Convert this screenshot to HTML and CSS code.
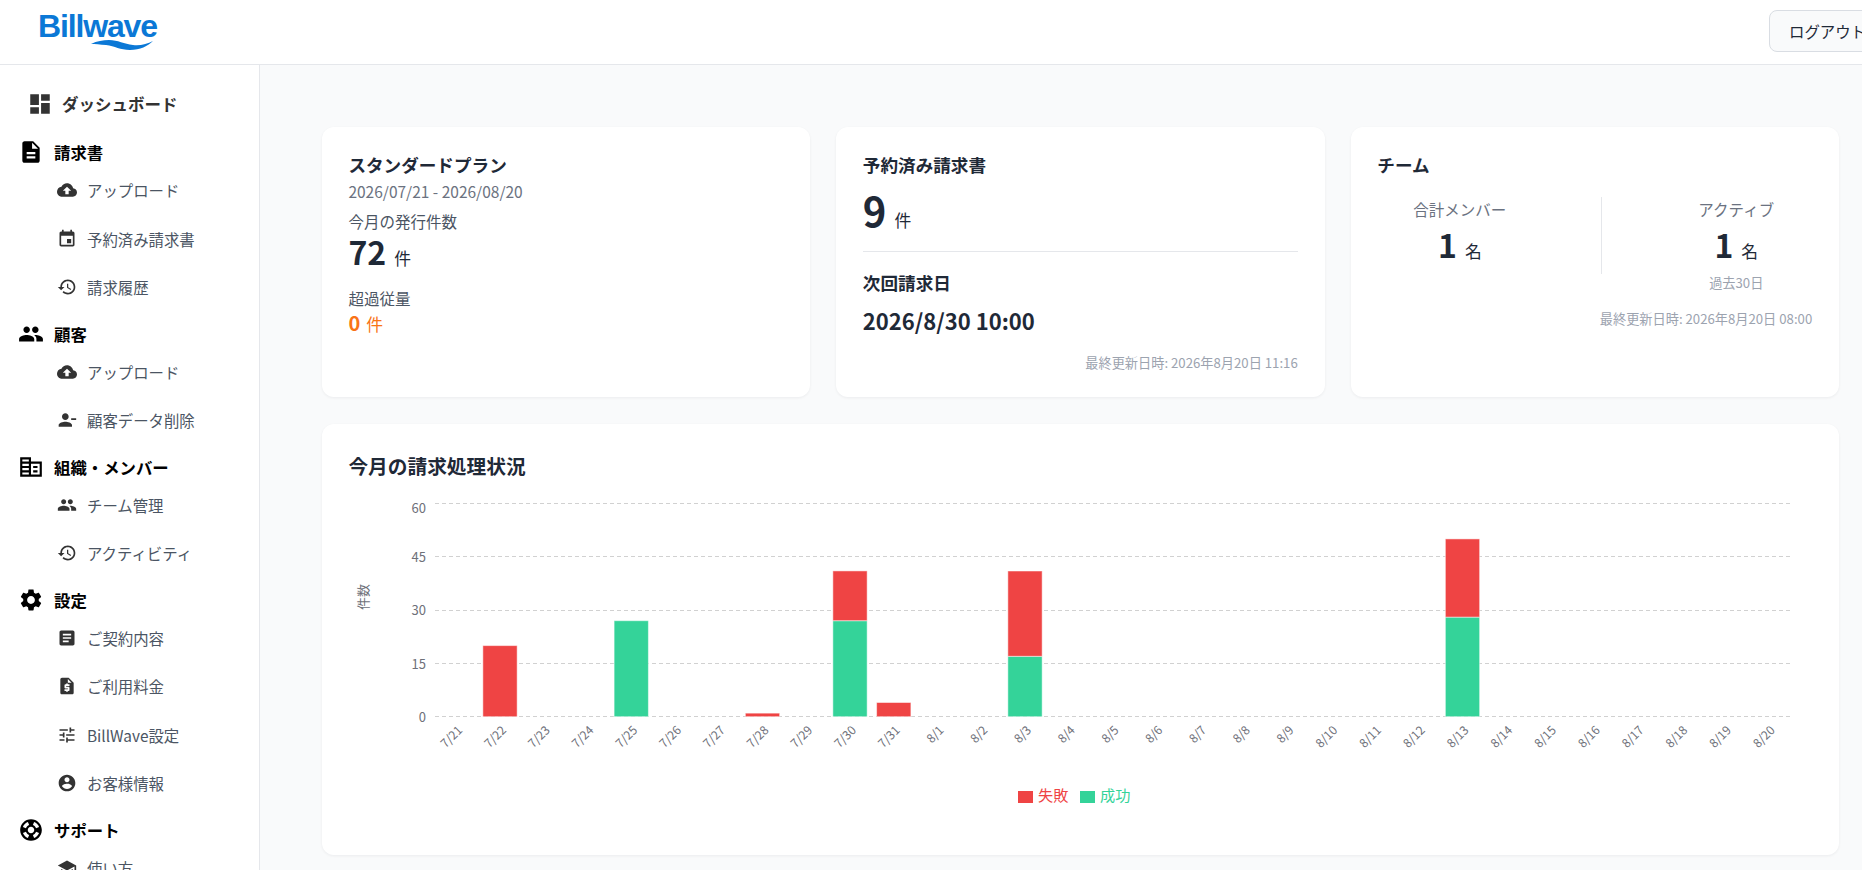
FILE: index.html
```html
<!DOCTYPE html>
<html lang="ja">
<head>
<meta charset="utf-8">
<title>Billwave</title>
<link rel="stylesheet" href="styles.css">
</head>
<body>
<svg class="sprite" aria-hidden="true">
  <symbol id="i-dashboard" viewBox="0 0 24 24"><path d="M3 13h8V3H3v10zm0 8h8v-6H3v6zm10 0h8V11h-8v10zm0-18v6h8V3h-8z"/></symbol>
  <symbol id="i-description" viewBox="0 0 24 24"><path d="M14 2H6c-1.1 0-1.99.9-1.99 2L4 20c0 1.1.89 2 1.99 2H18c1.1 0 2-.9 2-2V8l-6-6zm2 16H8v-2h8v2zm0-4H8v-2h8v2zm-3-5V3.5L18.5 9H13z"/></symbol>
  <symbol id="i-upload" viewBox="0 0 24 24"><path d="M19.35 10.04C18.67 6.59 15.64 4 12 4 9.11 4 6.6 5.64 5.35 8.04 2.34 8.36 0 10.91 0 14c0 3.31 2.69 6 6 6h13c2.76 0 5-2.24 5-5 0-2.64-2.05-4.78-4.65-4.96zM14 13v4h-4v-4H7l5-5 5 5h-3z"/></symbol>
  <symbol id="i-event" viewBox="0 0 24 24"><path d="M17 12h-5v5h5v-5zM16 1v2H8V1H6v2H5c-1.11 0-1.99.9-1.99 2L3 19c0 1.1.89 2 2 2h14c1.1 0 2-.9 2-2V5c0-1.1-.9-2-2-2h-1V1h-2zm3 18H5V8h14v11z"/></symbol>
  <symbol id="i-history" viewBox="0 0 24 24"><path d="M13 3c-4.97 0-9 4.03-9 9H1l3.89 3.89.07.14L9 12H6c0-3.87 3.13-7 7-7s7 3.13 7 7-3.13 7-7 7c-1.93 0-3.68-.79-4.94-2.06l-1.42 1.42C8.27 19.99 10.51 21 13 21c4.97 0 9-4.03 9-9s-4.03-9-9-9zm-1 5v5l4.28 2.54.72-1.21-3.5-2.08V8H12z"/></symbol>
  <symbol id="i-people" viewBox="0 0 24 24"><path d="M16 11c1.66 0 2.99-1.34 2.99-3S17.66 5 16 5c-1.66 0-3 1.34-3 3s1.34 3 3 3zm-8 0c1.66 0 2.99-1.34 2.99-3S9.66 5 8 5C6.34 5 5 6.34 5 8s1.34 3 3 3zm0 2c-2.33 0-7 1.17-7 3.5V19h14v-2.5c0-2.33-4.67-3.5-7-3.5zm8 0c-.29 0-.62.02-.97.05 1.16.84 1.97 1.97 1.97 3.45V19h6v-2.5c0-2.33-4.67-3.5-7-3.5z"/></symbol>
  <symbol id="i-person-remove" viewBox="0 0 24 24"><path d="M14 8c0-2.21-1.79-4-4-4S6 5.79 6 8s1.79 4 4 4 4-1.79 4-4zm3 2v2h6v-2h-6zM2 18v2h16v-2c0-2.66-5.33-4-8-4s-8 1.34-8 4z"/></symbol>
  <symbol id="i-domain" viewBox="0 0 24 24"><path d="M12 7V3H2v18h20V7H12zM10 19H4v-2h6v2zm0-4H4v-2h6v2zm0-4H4V9h6v2zm0-4H4V5h6v2zm10 12h-8V9h8v10zm-2-8h-4v2h4v-2zm0 4h-4v2h4v-2z"/></symbol>
  <symbol id="i-settings" viewBox="0 0 24 24"><path d="M19.14 12.94c.04-.3.06-.61.06-.94 0-.32-.02-.64-.07-.94l2.03-1.58c.18-.14.23-.41.12-.61l-1.92-3.32c-.12-.22-.37-.29-.59-.22l-2.39.96c-.5-.38-1.03-.7-1.62-.94l-.36-2.54c-.04-.24-.24-.41-.48-.41h-3.84c-.24 0-.43.17-.47.41l-.36 2.54c-.59.24-1.13.57-1.62.94l-2.39-.96c-.22-.08-.47 0-.59.22L2.74 8.87c-.12.21-.08.47.12.61l2.03 1.58c-.05.3-.09.63-.09.94s.02.64.07.94l-2.03 1.58c-.18.14-.23.41-.12.61l1.92 3.32c.12.22.37.29.59.22l2.39-.96c.5.38 1.03.7 1.62.94l.36 2.54c.05.24.24.41.48.41h3.84c.24 0 .44-.17.47-.41l.36-2.54c.59-.24 1.13-.56 1.62-.94l2.39.96c.22.08.47 0 .59-.22l1.92-3.32c.12-.22.07-.47-.12-.61l-2.01-1.58zM12 15.6c-1.98 0-3.6-1.62-3.6-3.6s1.62-3.6 3.6-3.6 3.6 1.62 3.6 3.6-1.62 3.6-3.6 3.6z"/></symbol>
  <symbol id="i-article" viewBox="0 0 24 24"><path d="M19 3H5c-1.1 0-2 .9-2 2v14c0 1.1.9 2 2 2h14c1.1 0 2-.9 2-2V5c0-1.1-.9-2-2-2zm-5 14H7v-2h7v2zm3-4H7v-2h10v2zm0-4H7V7h10v2z"/></symbol>
  <symbol id="i-quote" viewBox="0 0 24 24"><path d="M14 2H6c-1.1 0-1.99.9-1.99 2L4 20c0 1.1.89 2 1.99 2H18c1.1 0 2-.9 2-2V8l-6-6zm1 10h-4v1h3c.55 0 1 .45 1 1v3c0 .55-.45 1-1 1h-1v1h-2v-1H9v-2h4v-1h-3c-.55 0-1-.45-1-1v-3c0-.55.45-1 1-1h1V9h2v1h2v2zm-2-4V3.5L17.5 8H13z"/></symbol>
  <symbol id="i-tune" viewBox="0 0 24 24"><path d="M3 17v2h6v-2H3zM3 5v2h10V5H3zm10 16v-2h8v-2h-8v-2h-2v6h2zM7 9v2H3v2h4v2h2V9H7zm14 4v-2H11v2h10zm-6-4h2V7h4V5h-4V3h-2v6z"/></symbol>
  <symbol id="i-account" viewBox="0 0 24 24"><path d="M12 2C6.48 2 2 6.48 2 12s4.48 10 10 10 10-4.48 10-10S17.52 2 12 2zm0 3c1.66 0 3 1.34 3 3s-1.34 3-3 3-3-1.34-3-3 1.34-3 3-3zm0 14.2c-2.5 0-4.71-1.28-6-3.22.03-1.99 4-3.08 6-3.08 1.99 0 5.97 1.09 6 3.08-1.29 1.94-3.5 3.22-6 3.22z"/></symbol>
  <symbol id="i-support" viewBox="0 0 24 24"><path d="M12 2C6.48 2 2 6.48 2 12s4.48 10 10 10 10-4.48 10-10S17.52 2 12 2zm7.46 7.12l-2.78 1.15c-.51-1.36-1.58-2.44-2.95-2.94l1.15-2.78c2.1.8 3.77 2.47 4.58 4.57zM12 15c-1.66 0-3-1.34-3-3s1.34-3 3-3 3 1.34 3 3-1.34 3-3 3zM9.13 4.54l1.17 2.78c-1.38.5-2.47 1.59-2.98 2.97L4.54 9.13c.81-2.11 2.48-3.78 4.59-4.59zM4.54 14.87l2.78-1.15c.51 1.38 1.59 2.46 2.97 2.96l-1.17 2.78c-2.1-.81-3.77-2.48-4.58-4.59zm10.34 4.59l-1.15-2.78c1.37-.51 2.45-1.59 2.95-2.97l2.78 1.17c-.81 2.1-2.48 3.77-4.58 4.58z"/></symbol>
  <symbol id="i-school" viewBox="0 0 24 24"><path d="M5 13.18v4L12 21l7-3.82v-4L12 17l-7-3.82zM12 3L1 9l11 6 9-4.91V17h2V9L12 3z"/></symbol>
</svg>

<div class="app">
  <header class="header">
    <div class="logo">
      <span class="logo-text">Billwave</span>
      <svg class="logo-wave" viewBox="0 0 62 10"><path d="M0 4C6 1 12 0 18 0C27 0 33 4 42 5C49 6 56 4 62 1C57 6 49 10 39 10C29 10 24 6 15 5C9 4.500 4 4 0 4Z"/></svg>
    </div>
    <button class="logout" type="button">ログアウト</button>
  </header>

  <div class="body">
    <nav class="sidebar">
      <a class="nav-top"><svg class="ic-top"><use href="#i-dashboard"/></svg>ダッシュボード</a>

      <div class="nav-section"><svg class="ic-sec"><use href="#i-description"/></svg>請求書</div>
      <a class="nav-item"><svg class="ic-sub"><use href="#i-upload"/></svg>アップロード</a>
      <a class="nav-item"><svg class="ic-sub"><use href="#i-event"/></svg>予約済み請求書</a>
      <a class="nav-item"><svg class="ic-sub"><use href="#i-history"/></svg>請求履歴</a>

      <div class="nav-section"><svg class="ic-sec"><use href="#i-people"/></svg>顧客</div>
      <a class="nav-item"><svg class="ic-sub"><use href="#i-upload"/></svg>アップロード</a>
      <a class="nav-item"><svg class="ic-sub"><use href="#i-person-remove"/></svg>顧客データ削除</a>

      <div class="nav-section"><svg class="ic-sec"><use href="#i-domain"/></svg>組織・メンバー</div>
      <a class="nav-item"><svg class="ic-sub"><use href="#i-people"/></svg>チーム管理</a>
      <a class="nav-item"><svg class="ic-sub"><use href="#i-history"/></svg>アクティビティ</a>

      <div class="nav-section"><svg class="ic-sec"><use href="#i-settings"/></svg>設定</div>
      <a class="nav-item"><svg class="ic-sub"><use href="#i-article"/></svg>ご契約内容</a>
      <a class="nav-item"><svg class="ic-sub"><use href="#i-quote"/></svg>ご利用料金</a>
      <a class="nav-item"><svg class="ic-sub"><use href="#i-tune"/></svg>BillWave設定</a>
      <a class="nav-item"><svg class="ic-sub"><use href="#i-account"/></svg>お客様情報</a>

      <div class="nav-section"><svg class="ic-sec"><use href="#i-support"/></svg>サポート</div>
      <a class="nav-item"><svg class="ic-sub"><use href="#i-school"/></svg>使い方</a>
    </nav>

    <main class="main">
      <section class="cards">
        <article class="card">
          <h2 class="card-title">スタンダードプラン</h2>
          <p class="period">2026/07/21 - 2026/08/20</p>
          <p class="label label-issued">今月の発行件数</p>
          <p class="value value-plan"><b class="num-lg">72</b><span class="unit">件</span></p>
          <p class="label label-over">超過従量</p>
          <p class="value over"><b class="num-sm">0</b><span class="unit-sm">件</span></p>
        </article>

        <article class="card">
          <h2 class="card-title">予約済み請求書</h2>
          <p class="value value-nine"><b class="num-xl">9</b><span class="unit">件</span></p>
          <hr class="rule">
          <h2 class="card-title">次回請求日</h2>
          <p class="next-date">2026/8/30 10:00</p>
          <p class="updated">最終更新日時: 2026年8月20日 11:16</p>
        </article>

        <article class="card">
          <h2 class="card-title">チーム</h2>
          <div class="team">
            <div class="team-col team-left">
              <p class="label">合計メンバー</p>
              <p class="value"><b class="num-lg">1</b><span class="unit">名</span></p>
            </div>
            <div class="team-col team-right">
              <p class="label">アクティブ</p>
              <p class="value"><b class="num-lg">1</b><span class="unit">名</span></p>
              <p class="team-note">過去30日</p>
            </div>
          </div>
          <p class="updated updated-team">最終更新日時: 2026年8月20日 08:00</p>
        </article>
      </section>

      <section class="card chart-card">
        <h2 class="chart-title">今月の請求処理状況</h2>
        <svg class="chart" viewBox="349 490 1463 338">
          <g class="grid">
            <line x1="436" x2="1793" y1="503.500" y2="503.500"/>
            <line x1="436" x2="1793" y1="556.500" y2="556.500"/>
            <line x1="436" x2="1793" y1="610.500" y2="610.500"/>
            <line x1="436" x2="1793" y1="663.500" y2="663.500"/>
            <line x1="436" x2="1793" y1="716.500" y2="716.500"/>
          </g>
          <g class="y-labels">
            <text x="427" y="513">60</text>
            <text x="427" y="562">45</text>
            <text x="427" y="615">30</text>
            <text x="427" y="668.500">15</text>
            <text x="427" y="722">0</text>
          </g>
          <text class="y-name" transform="translate(369 597) rotate(-90)">件数</text>
          <g class="bars">
            <rect class="fail" x="483.850" y="645.600" width="34.300" height="71.100"/>
            <rect class="ok" x="615.100" y="620.700" width="34.300" height="96"/>
            <rect class="fail" x="746.350" y="713.140" width="34.300" height="3.560"/>
            <rect class="ok" x="833.850" y="620.700" width="34.300" height="96"/>
            <rect class="fail" x="833.850" y="570.900" width="34.300" height="49.800"/>
            <rect class="fail" x="877.600" y="702.500" width="34.300" height="14.200"/>
            <rect class="ok" x="1008.850" y="656.300" width="34.300" height="60.400"/>
            <rect class="fail" x="1008.850" y="571" width="34.300" height="85.300"/>
            <rect class="ok" x="1446.350" y="617.100" width="34.300" height="99.600"/>
            <rect class="fail" x="1446.350" y="538.900" width="34.300" height="78.200"/>
          </g>
          <g class="x-labels">
            <text transform="translate(464.250 731) rotate(-45)">7/21</text>
            <text transform="translate(508 731) rotate(-45)">7/22</text>
            <text transform="translate(551.750 731) rotate(-45)">7/23</text>
            <text transform="translate(595.500 731) rotate(-45)">7/24</text>
            <text transform="translate(639.250 731) rotate(-45)">7/25</text>
            <text transform="translate(683 731) rotate(-45)">7/26</text>
            <text transform="translate(726.750 731) rotate(-45)">7/27</text>
            <text transform="translate(770.500 731) rotate(-45)">7/28</text>
            <text transform="translate(814.250 731) rotate(-45)">7/29</text>
            <text transform="translate(858 731) rotate(-45)">7/30</text>
            <text transform="translate(901.750 731) rotate(-45)">7/31</text>
            <text transform="translate(945.500 731) rotate(-45)">8/1</text>
            <text transform="translate(989.250 731) rotate(-45)">8/2</text>
            <text transform="translate(1033 731) rotate(-45)">8/3</text>
            <text transform="translate(1076.750 731) rotate(-45)">8/4</text>
            <text transform="translate(1120.500 731) rotate(-45)">8/5</text>
            <text transform="translate(1164.250 731) rotate(-45)">8/6</text>
            <text transform="translate(1208 731) rotate(-45)">8/7</text>
            <text transform="translate(1251.750 731) rotate(-45)">8/8</text>
            <text transform="translate(1295.500 731) rotate(-45)">8/9</text>
            <text transform="translate(1339.250 731) rotate(-45)">8/10</text>
            <text transform="translate(1383 731) rotate(-45)">8/11</text>
            <text transform="translate(1426.750 731) rotate(-45)">8/12</text>
            <text transform="translate(1470.500 731) rotate(-45)">8/13</text>
            <text transform="translate(1514.250 731) rotate(-45)">8/14</text>
            <text transform="translate(1558 731) rotate(-45)">8/15</text>
            <text transform="translate(1601.750 731) rotate(-45)">8/16</text>
            <text transform="translate(1645.500 731) rotate(-45)">8/17</text>
            <text transform="translate(1689.250 731) rotate(-45)">8/18</text>
            <text transform="translate(1733 731) rotate(-45)">8/19</text>
            <text transform="translate(1776.750 731) rotate(-45)">8/20</text>
          </g>
          <g class="legend">
            <rect class="fail-flat" x="1019" y="791" width="15" height="12"/>
            <text class="legend-fail" x="1039" y="801">失敗</text>
            <rect class="ok-flat" x="1081" y="791" width="15" height="12"/>
            <text class="legend-ok" x="1101" y="801">成功</text>
          </g>
        </svg>
      </section>
    </main>
  </div>
</div>
</body>
</html>
```

FILE: styles.css
```css
* { box-sizing: border-box; }
html, body { height: 100%; }
body {
  margin: 0;
  overflow: hidden;
  background: #f9fafb;
  color: #1f2937;
  font-family: "Noto Sans CJK JP", "Noto Sans", sans-serif;
}
p, h2 { margin: 0; font-weight: inherit; }
.sprite { position: absolute; width: 0; height: 0; }

.app { display: flex; flex-direction: column; height: 870px; }

.header {
  flex: none;
  height: 65px;
  display: flex;
  align-items: center;
  justify-content: space-between;
  padding-left: 38px;
  background: #fff;
  border-bottom: 1px solid #e5e7eb;
}
.logo { display: flex; flex-direction: column; width: 118px; margin-top: -1px; }
.logo-text {
  font-family: "Liberation Sans", Arial, sans-serif;
  font-weight: 700;
  font-size: 32px;
  line-height: 26px;
  letter-spacing: -1.15px;
  color: #0b78d6;
}
.logo-wave { width: 62px; height: 10px; margin: 1px 0 0 53px; fill: #0b78d6; }
.logout {
  flex: none;
  width: 117px;
  height: 42px;
  margin: 0 -24px 2px 0;
  padding: 0 19px;
  text-align: left;
  font: inherit;
  font-size: 15.4px;
  color: #1f2937;
  background: #f9fafb;
  border: 1px solid #d9dde3;
  border-radius: 8px;
}

.body { flex: 1; display: flex; min-height: 0; }

.sidebar {
  flex: none;
  width: 260px;
  padding-top: 15px;
  overflow: hidden;
  background: #fff;
  border-right: 1px solid #e5e7eb;
}
.nav-top {
  display: flex;
  align-items: center;
  gap: 9px;
  height: 48px;
  padding-left: 27px;
  margin-bottom: 10px;
  font-size: 16.5px;
  font-weight: 700;
  color: #333;
}
.ic-top { width: 26px; height: 26px; fill: #333; }
.nav-section {
  display: flex;
  align-items: center;
  gap: 10px;
  height: 28px;
  padding-left: 18px;
  font-size: 16.4px;
  font-weight: 700;
  color: #000;
}
.nav-item + .nav-section { margin-top: 8px; }
.ic-sec { width: 26px; height: 26px; fill: #000; }
.nav-item {
  display: flex;
  align-items: center;
  gap: 10px;
  height: 48.5px;
  padding-left: 57px;
  font-size: 15.4px;
  color: #4b5563;
}
.ic-sub { width: 20px; height: 20px; fill: #333; }

.main { flex: 1; min-width: 0; padding: 62px 23px 0 61.6px; }
.cards { display: grid; grid-template-columns: repeat(3, 1fr); column-gap: 26px; margin-bottom: 27px; }
.card {
  height: 270px;
  padding: 26px 26.8px 27px;
  background: #fff;
  border-radius: 12px;
  box-shadow: 0 1px 3px rgba(17, 24, 39, .06);
}
.card-title { font-size: 17.6px; font-weight: 700; line-height: 24px; color: #1f2937; }
.period { font-size: 15.5px; line-height: 22px; margin-top: 3px; color: #6b7280; }
.label { font-size: 15.5px; line-height: 24px; color: #6b7280; }
.label-issued { margin-top: 7px; color: #4b5563; }
.label-over { margin-top: 10px; color: #4b5563; }
.value { display: flex; align-items: baseline; line-height: 46px; color: #1f2937; }
.value-plan { line-height: 36px; }
.num-lg { font-size: 32px; font-weight: 700; }
.num-xl { font-size: 40px; font-weight: 700; }
.num-sm { font-size: 20px; font-weight: 700; }
.unit { font-size: 16.8px; margin-left: 8px; }
.unit-sm { font-size: 16.8px; margin-left: 6px; }
.over { color: #f97316; line-height: 26px; }
.value-nine { line-height: 58px; margin-top: 4px; }
.rule { margin: 2px 0 19px; border: 0; border-top: 1px solid #e5e7eb; }
.next-date { font-size: 22px; font-weight: 700; line-height: 32px; margin-top: 9px; color: #1f2937; }
.updated { margin-top: 19px; font-size: 13.2px; line-height: 16px; text-align: right; color: #9ca3af; }

.team { display: flex; align-items: flex-start; margin-top: 20px; }
.team-col { text-align: center; }
.team-col .value { justify-content: center; }
.team-left { width: 225px; padding-right: 59px; border-right: 1px solid #e5e7eb; }
.team-right { flex: 1; padding-left: 58px; }
.team-note { font-size: 13.2px; line-height: 18px; color: #9ca3af; }
.updated-team { margin-top: 19px; }

.chart-card { height: 431px; padding-top: 27px; }
.chart-title { font-size: 19.7px; font-weight: 700; line-height: 30px; margin-bottom: 9px; color: #1f2937; }
.chart { display: block; width: 1463px; height: 338px; font-family: "Noto Sans CJK JP", "Noto Sans", sans-serif; }
.grid line { stroke: #d1d1d1; stroke-width: 1; stroke-dasharray: 4 3; }
.y-labels text { font-size: 13px; fill: #6e7079; text-anchor: end; }
.y-name { font-size: 13px; fill: #6e7079; text-anchor: middle; }
.bars rect { stroke: #fff; stroke-opacity: .5; stroke-width: 1; }
.fail { fill: #ef4444; }
.ok { fill: #34d399; }
.fail-flat { fill: #ef4444; }
.ok-flat { fill: #34d399; }
.x-labels text { font-size: 12px; fill: #6e7079; text-anchor: end; }
.legend text { font-size: 15.2px; }
.legend-fail { fill: #ef4444; }
.legend-ok { fill: #34d399; }
```
